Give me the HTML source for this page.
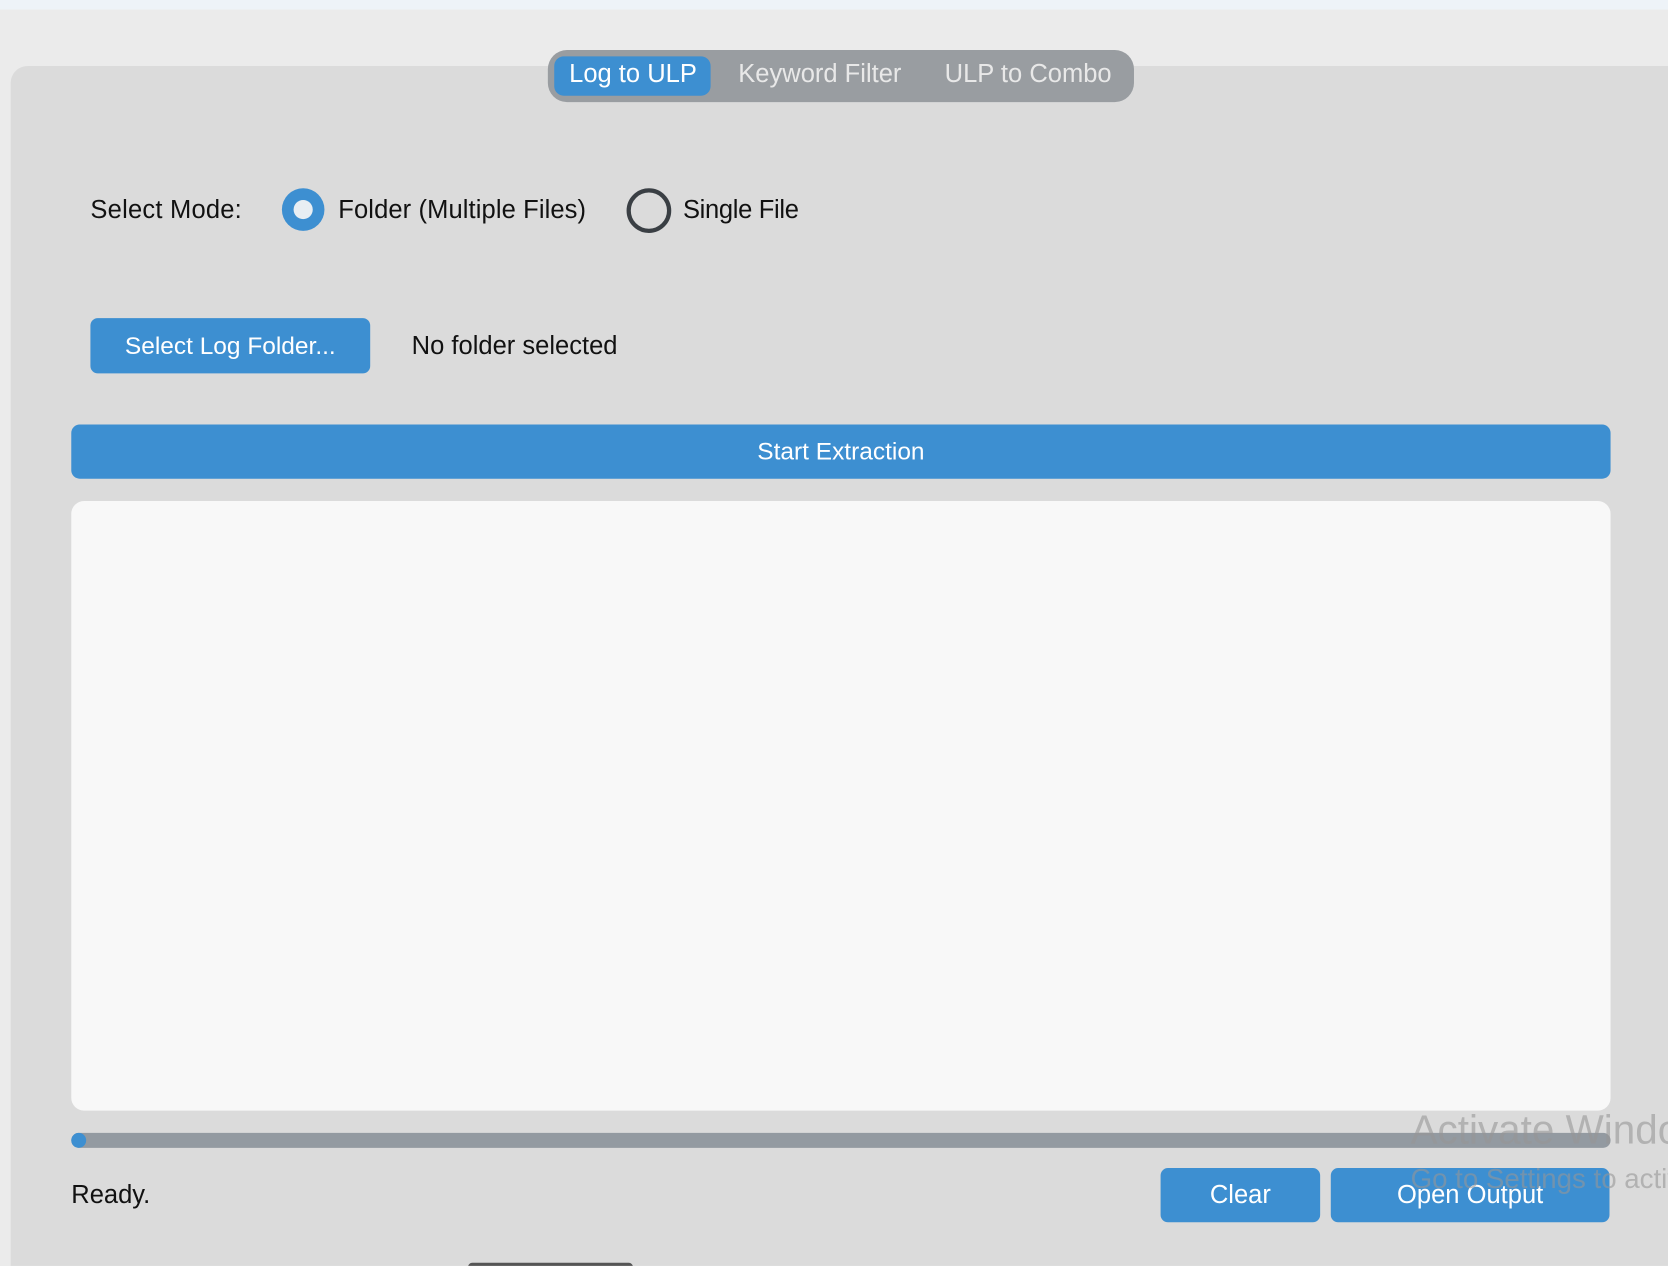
<!DOCTYPE html>
<html><head><meta charset="utf-8"><style>
html,body{margin:0;padding:0;width:1668px;height:1266px;overflow:hidden;background:#ebebeb;font-family:"Liberation Sans",sans-serif}
#w{position:absolute;left:0;top:0;width:1568px;height:1190px;overflow:hidden;transform:scale(1.06378);transform-origin:0 0}
.a{position:absolute}
.btn{position:absolute;background:#3d8fd1;color:#fff;border-radius:7px;font-size:23px;display:flex;align-items:center;justify-content:center}
</style></head><body><div id="w">
<div class="a" style="left:0;top:0;width:1568px;height:9px;background:#eef3f8"></div>
<div class="a" style="left:10px;top:62px;width:1580px;height:1160px;background:#dbdbdb;border-radius:16px"></div>
<div class="a" style="left:515px;top:47px;width:551px;height:49px;background:#999da1;border-radius:18px"></div>
<div class="a" style="left:521px;top:53px;width:147px;height:37px;background:#3d8fd1;border-radius:9px"></div>
<div class="a" style="left:535px;top:56px;font-size:24px;color:#fff">Log to ULP</div>
<div class="a" style="left:694px;top:56px;font-size:24px;color:#e8e8e8">Keyword Filter</div>
<div class="a" style="left:888px;top:56px;font-size:24px;color:#e8e8e8">ULP to Combo</div>
<div class="a" style="left:85px;top:184px;font-size:24px;color:#111;letter-spacing:0.2px">Select Mode:</div>
<div class="a" style="left:265px;top:177px;width:40px;height:40px;border-radius:50%;background:#3d8fd1"></div>
<div class="a" style="left:276px;top:188px;width:18px;height:18px;border-radius:50%;background:#e8eef3"></div>
<div class="a" style="left:318px;top:184px;font-size:24px;color:#111;letter-spacing:0.1px">Folder (Multiple Files)</div>
<div class="a" style="left:589px;top:177px;width:34px;height:34px;border-radius:50%;border:4px solid #3a3f44"></div>
<div class="a" style="left:642px;top:184px;font-size:24px;color:#111;letter-spacing:-0.3px">Single File</div>
<div class="btn" style="left:85px;top:299px;width:263px;height:52px">Select Log Folder...</div>
<div class="a" style="left:387px;top:312px;font-size:24px;color:#111">No folder selected</div>
<div class="btn" style="left:67px;top:399px;width:1447px;height:51px;border-radius:8px">Start Extraction</div>
<div class="a" style="left:67px;top:471px;width:1447px;height:573px;background:#f8f8f8;border-radius:12px"></div>
<div class="a" style="left:67px;top:1065px;width:1447px;height:14px;background:#939aa1;border-radius:7px"></div>
<div class="a" style="left:67px;top:1065px;width:14px;height:14px;background:#3d8fd1;border-radius:7px"></div>
<div class="a" style="left:67px;top:1110px;font-size:24px;color:#111">Ready.</div>
<div class="btn" style="left:1091px;top:1098px;width:150px;height:51px;font-size:24px">Clear</div>
<div class="btn" style="left:1251px;top:1098px;width:262px;height:51px;font-size:24px">Open Output</div>
<div class="a" style="left:1326px;top:1042px;font-size:38px;color:rgba(150,150,150,.6);white-space:nowrap">Activate Windows</div>
<div class="a" style="left:1326px;top:1093px;font-size:26px;color:rgba(150,150,150,.6);white-space:nowrap">Go to Settings to activate Windows.</div>
<div class="a" style="left:440px;top:1187px;width:155px;height:8px;background:#555;border-radius:4px"></div>
</div></body></html>
